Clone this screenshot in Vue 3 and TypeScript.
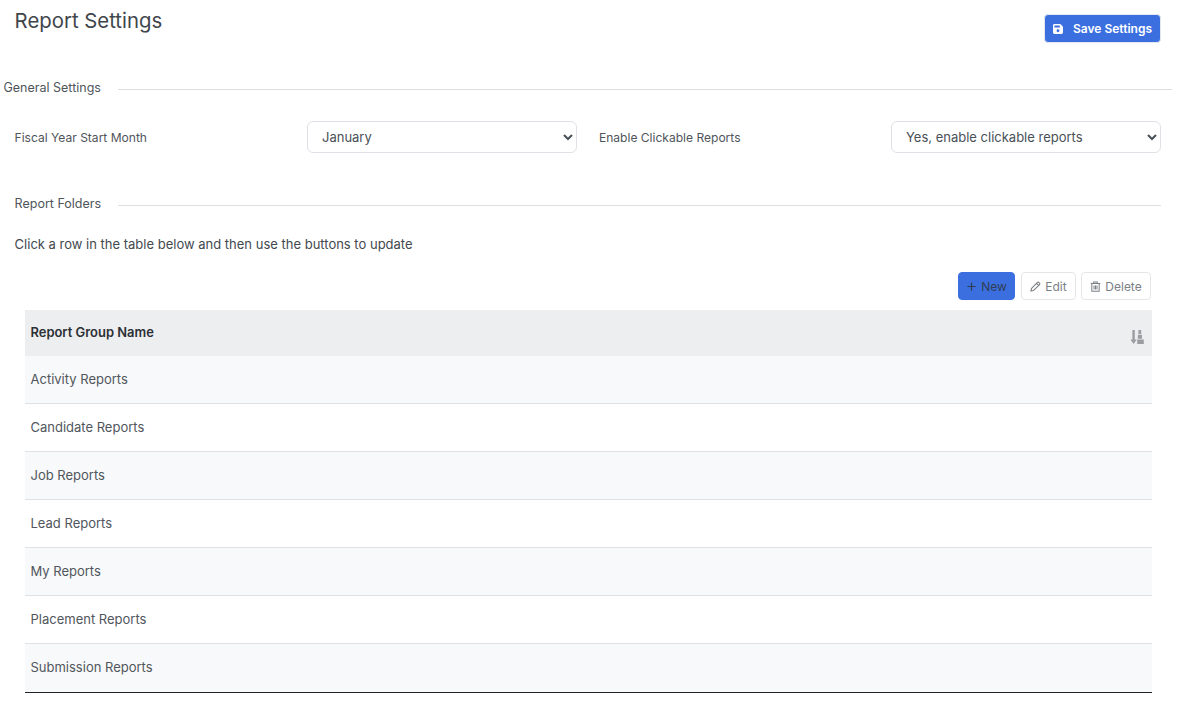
<script setup lang="ts">
import { ref } from 'vue';

const months = ['January', 'February', 'March', 'April', 'May', 'June', 'July', 'August', 'September', 'October', 'November', 'December'];
const fiscalMonth = ref('January');
const clickable = ref('yes');

const folders = [
  'Activity Reports',
  'Candidate Reports',
  'Job Reports',
  'Lead Reports',
  'My Reports',
  'Placement Reports',
  'Submission Reports',
];
</script>

<template>
  <div class="page">
    <header class="page-head">
      <h1 class="title">Report Settings</h1>
      <button class="btn btn-primary btn-save" type="button">
        <svg class="ico-save" viewBox="0 0 448 448" aria-hidden="true">
          <path fill="currentColor" d="M64 0C29 0 0 29 0 64v320c0 35 29 64 64 64h320c35 0 64-29 64-64V141c0-17-7-33-19-45L352 19C340 7 324 0 307 0H64zm16 64h208c9 0 16 7 16 16v64c0 9-7 16-16 16H80c-9 0-16-7-16-16V80c0-9 7-16 16-16zm144 176a64 64 0 1 1 0 128 64 64 0 1 1 0-128z" />
        </svg>
        Save Settings
      </button>
    </header>

    <div class="divider divider-wide">
      <span class="divider-label">General Settings</span>
      <span class="divider-line"></span>
    </div>

    <div class="settings-grid">
      <label class="field-label">Fiscal Year Start Month</label>
      <select v-model="fiscalMonth" class="select">
        <option v-for="m in months" :key="m" :value="m">{{ m }}</option>
      </select>
      <label class="field-label field-label-second">Enable Clickable Reports</label>
      <select v-model="clickable" class="select">
        <option value="yes">Yes, enable clickable reports</option>
        <option value="no">No, disable clickable reports</option>
      </select>
    </div>

    <div class="divider">
      <span class="divider-label">Report Folders</span>
      <span class="divider-line"></span>
    </div>

    <p class="hint">Click a row in the table below and then use the buttons to update</p>

    <div class="table-wrap">
      <div class="toolbar">
        <button class="btn btn-primary btn-new" type="button">
          <svg class="ico" viewBox="0 0 12 12" aria-hidden="true">
            <path d="M6 1.5v9M1.5 6h9" fill="none" stroke="currentColor" stroke-width="1.3" />
          </svg>
          New
        </button>
        <button class="btn btn-light btn-edit" type="button">
          <svg class="ico" viewBox="0 0 12 12" aria-hidden="true">
            <path d="M1 11l.7-3 6.4-6.4a1.1 1.1 0 0 1 1.6 0l.7.7a1.1 1.1 0 0 1 0 1.6L4 10.3 1 11zM7.2 2.6l2.2 2.2" fill="none" stroke="currentColor" stroke-width="1.2" stroke-linejoin="round" />
          </svg>
          Edit
        </button>
        <button class="btn btn-light btn-delete" type="button">
          <svg class="ico" viewBox="0 0 12 12" aria-hidden="true">
            <path d="M.8 2.8h10.4M4 2.8V1h4v1.8M2 2.8v8.4h8V2.8M4.4 5v4.2M6 5v4.2M7.6 5v4.2" fill="none" stroke="currentColor" stroke-width="1.1" />
          </svg>
          Delete
        </button>
      </div>

      <table class="folders">
        <thead>
          <tr>
            <th>
              <div class="th-inner">
                <span>Report Group Name</span>
                <svg class="ico-sort" viewBox="0 0 14 14" aria-hidden="true">
                  <path fill="currentColor" d="M2.4 0h2.4v9.4h2L3.6 14 .4 9.4h2zM8.4 0h2.8v4H8.4zM7.8 4.8h4.2v4H7.8zM7.2 9.6h6.6V14H7.2z" />
                </svg>
              </div>
            </th>
          </tr>
        </thead>
        <tbody>
          <tr v-for="f in folders" :key="f">
            <td>{{ f }}</td>
          </tr>
        </tbody>
      </table>
    </div>
  </div>
</template>

<style>
body {
  background: #fff;
}
</style>

<style scoped>
.page {
  width: 1186px;
  height: 707px;
  box-sizing: border-box;
  padding: 0 25px 0 14.6px;
  overflow: hidden;
  font-family: Inter, 'Liberation Sans', sans-serif;
  color: #343a40;
}
.page-head {
  display: flex;
  justify-content: space-between;
  align-items: flex-start;
  height: 77px;
}
.title {
  margin: 9px 0 0;
  font-size: 20.35px;
  line-height: 24px;
  font-weight: 400;
  color: #3f454b;
}
.btn {
  display: inline-flex;
  align-items: center;
  justify-content: center;
  height: 28px;
  box-sizing: border-box;
  border-radius: 4px;
  font-family: inherit;
  font-size: 12px;
  padding: 0;
  white-space: nowrap;
  cursor: pointer;
}
.btn-primary {
  background: #3b6fe0;
  border: 1px solid #3b6fe0;
  color: #fff;
}
.btn-save {
  margin-top: 14px;
  width: 117px;
  height: 29px;
  padding-bottom: 1px;
  gap: 10px;
  font-weight: 600;
  border-color: #e3e7f0;
}
.ico-save {
  width: 10px;
  height: 10px;
  margin-top: 2px;
}
.divider {
  display: flex;
  align-items: center;
  height: 20px;
}
.divider-wide {
  margin: 0 -11px 0 -11.1px;
}
.divider-label {
  width: 103.4px;
  flex: none;
  font-size: 12.5px;
  color: #4f555b;
}
.divider-wide .divider-label {
  width: 114.5px;
}
.divider-line {
  flex: 1;
  height: 1px;
  margin-top: 5px;
  background: #dcdee0;
}
.settings-grid {
  display: grid;
  grid-template-columns: repeat(4, 270px);
  column-gap: 22px;
  align-items: center;
  margin-top: 24px;
  height: 32px;
}
.field-label {
  font-size: 12.05px;
  color: #4f555b;
}
.field-label-second {
  padding-left: 0.4px;
}
.select {
  width: 270px;
  height: 32px;
  box-sizing: border-box;
  padding: 0 0 0 10.4px;
  background: #fff;
  border: 1px solid #dee2e6;
  border-radius: 6px;
  font-family: inherit;
  font-size: 13px;
  color: #495057;
}
.settings-grid + .divider {
  margin-top: 40px;
}
.hint {
  margin: 23px 0 0;
  font-size: 13px;
  line-height: 16px;
  color: #43494f;
}
.table-wrap {
  margin: 20px 9px 0 10.4px;
}
.toolbar {
  display: flex;
  justify-content: flex-end;
  gap: 5px;
  padding-right: 1px;
  height: 38px;
}
.btn-new {
  width: 57px;
  margin-right: 1px;
  gap: 4px;
  color: #2f3e55;
}
.btn-light {
  gap: 4px;
  background: #fff;
  border: 1px solid #e4e6e9;
  color: #7b8085;
}
.btn-edit {
  width: 55px;
}
.btn-delete {
  width: 70px;
}
.ico {
  width: 11px;
  height: 11px;
  flex: none;
}
.folders {
  width: 100%;
  border-collapse: separate;
  border-spacing: 0;
  font-size: 13px;
}
.folders th {
  height: 46px;
  padding: 0 8px 0 5.5px;
  background: #edeef0;
  text-align: left;
  font-weight: 600;
  font-size: 12.95px;
  color: #2b3035;
}
.th-inner {
  display: flex;
  justify-content: space-between;
  align-items: center;
  box-sizing: border-box;
  height: 46px;
  padding-bottom: 2px;
}
.ico-sort {
  width: 14px;
  height: 14px;
  margin-top: 9px;
  color: #9a9ea3;
}
.folders td {
  height: 48px;
  box-sizing: border-box;
  padding: 0 5.5px 2px;
  border-bottom: 1px solid #dee2e6;
  color: #50565c;
}
.folders tbody tr:nth-child(odd) td {
  background: #f8f9fa;
}
.folders tbody tr:last-child td {
  height: 49px;
  padding-bottom: 3px;
  border-bottom: 1px solid #212529;
}
</style>
